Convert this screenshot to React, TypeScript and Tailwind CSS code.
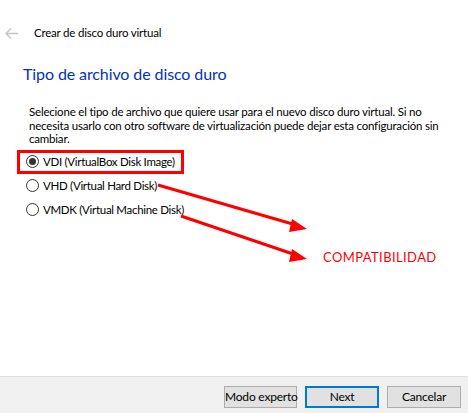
import React from 'react';

const options = [
  { label: 'VDI (VirtualBox Disk Image)', checked: true },
  { label: 'VHD (Virtual Hard Disk)', checked: false },
  { label: 'VMDK (Virtual Machine Disk)', checked: false },
];

const Radio: React.FC<{ checked: boolean }> = ({ checked }) => (
  <span className="w-[13px] h-[13px] rounded-full border border-[#333] bg-white flex items-center justify-center shrink-0">
    {checked && <span className="w-[7px] h-[7px] rounded-full bg-[#333]" />}
  </span>
);

const App: React.FC = () => {
  return (
    <div className="relative w-[468px] h-[413px] flex flex-col bg-white text-[11.5px] tracking-[-0.2px] text-black font-['Lato',sans-serif] overflow-hidden">
      {/* Header */}
      <div className="flex items-center h-[26px] mt-[20px] pl-[5px]">
        <svg width="13" height="11" viewBox="0 0 13 11" className="shrink-0">
          <path d="M6 0.5 L1 5.5 L6 10.5 M1 5.5 H13" fill="none" stroke="#c4c4c4" strokeWidth="1.3" />
        </svg>
        <span className="ml-[16px]">Crear de disco duro virtual</span>
      </div>

      {/* Content */}
      <div className="pl-[23px] pr-[20px]">
        <h1 className="mt-[17px] text-[16px] leading-[22px] text-[#0033bc] tracking-[-0.1px]">Tipo de archivo de disco duro</h1>
        <p className="mt-[20px] pl-[6px] leading-[13.5px]">
          Selecione el tipo de archivo que quiere usar para el nuevo disco duro virtual. Si no necesita usarlo con
          otro software de virtualización puede dejar esta configuración sin cambiar.
        </p>
        <div className="mt-[4px] -ml-[6px] flex flex-col">
          {options.map((o) => (
            <div
              key={o.label}
              className={`flex items-center gap-[4px] h-[24px] w-[167px] border-[3px] pl-[6px] ${o.checked ? 'border-[#ff0000]' : 'border-transparent'}`}
            >
              <Radio checked={o.checked} />
              <span className="whitespace-nowrap tracking-[-0.3px]">{o.label}</span>
            </div>
          ))}
        </div>
      </div>

      <div className="flex-1" />

      {/* Footer */}
      <div className="h-[37px] border-t border-[#dfdfdf] bg-[#f0f0f0] flex items-center justify-end gap-[8px] pr-[7px] pt-[4px]">
        <button className="w-[73px] h-[22px] border border-[#adadad] bg-[#e1e1e1] text-[12px] leading-none whitespace-nowrap tracking-[-0.2px]">Modo experto</button>
        <button className="w-[74px] h-[22px] border-2 border-[#0078d7] bg-[#e1e1e1] text-[12px] leading-none">Next</button>
        <button className="w-[74px] h-[22px] border border-[#adadad] bg-[#e1e1e1] text-[12px] leading-none">Cancelar</button>
      </div>

      {/* Annotation overlay */}
      <svg className="absolute left-0 top-0 pointer-events-none" width="468" height="413">
        <line x1="158" y1="185" x2="296" y2="225" stroke="#ff0000" strokeWidth="3" />
        <polygon points="307,229 292,219 289,232" fill="#ff0000" />
        <line x1="181" y1="216" x2="296" y2="255" stroke="#ff0000" strokeWidth="3" />
        <polygon points="307,259 292,249 289,262" fill="#ff0000" />
      </svg>
      <span className="absolute left-[323px] top-[248px] text-[13px] leading-[18px] text-[#ff0000] tracking-[0.4px]">COMPATIBILIDAD</span>
    </div>
  );
};

export default App;
